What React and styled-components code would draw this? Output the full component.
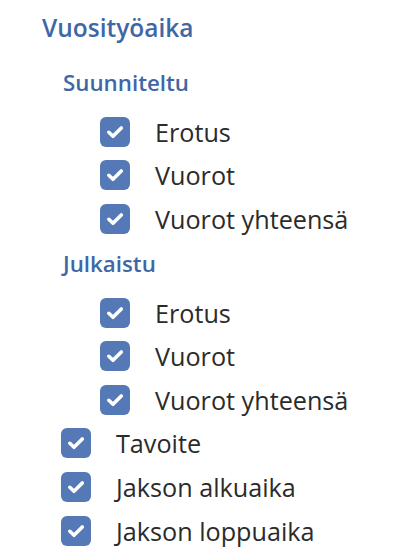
import styled, { createGlobalStyle } from "styled-components"

const GlobalStyle = createGlobalStyle`
body {
  margin: 0;
  background: #ffffff;
  font-family: "Open Sans", "Noto Sans", sans-serif;
}
`

const Panel = styled.div`
display: flex;
flex-direction: column;
padding: 12px 0 0 42px;
`

const Title = styled.div`
font-size: 24.5px;
font-weight: 600;
line-height: 32px;
color: #3f67a6;
margin-bottom: 16px;
`

const SubTitle = styled.div`
font-size: 22.3px;
font-weight: 600;
line-height: 30px;
color: #3f67a6;
padding: 8px 0 12px 21px;
`

const Row = styled.label`
display: flex;
align-items: center;
gap: 25px;
height: 43.6px;
padding-left: ${(p) => (p.$nested ? "58px" : "19px")};
`

const Box = styled.span`
width: 30px;
height: 30px;
border-radius: 6px;
background: #5479b6;
display: flex;
flex-shrink: 0;
`

const Label = styled.span`
font-size: 25.2px;
color: #2b2b2b;
line-height: 30px;
`

function Check() {
    return (
        <svg width="30" height="30" viewBox="0 0 30 30">
            <path d="M8.8 15.3 L13 19.3 L21.3 11" fill="none" stroke="#fff" strokeWidth="3.6" strokeLinecap="round" strokeLinejoin="round" />
        </svg>
    )
}

function Item({ text, nested }) {
    return (
        <Row $nested={nested}>
            <Box><Check /></Box>
            <Label>{text}</Label>
        </Row>
    )
}

const groups = [
    { title: "Suunniteltu", items: ["Erotus", "Vuorot", "Vuorot yhteensä"] },
    { title: "Julkaistu", items: ["Erotus", "Vuorot", "Vuorot yhteensä"] },
]

const extra = ["Tavoite", "Jakson alkuaika", "Jakson loppuaika"]

export default function App() {
    return (
        <>
            <GlobalStyle />
            <Panel>
                <Title>Vuosityöaika</Title>
                {groups.map((g) => (
                    <div key={g.title}>
                        <SubTitle>{g.title}</SubTitle>
                        {g.items.map((t) => <Item key={t} text={t} nested />)}
                    </div>
                ))}
                {extra.map((t) => <Item key={t} text={t} />)}
            </Panel>
        </>
    )
}
